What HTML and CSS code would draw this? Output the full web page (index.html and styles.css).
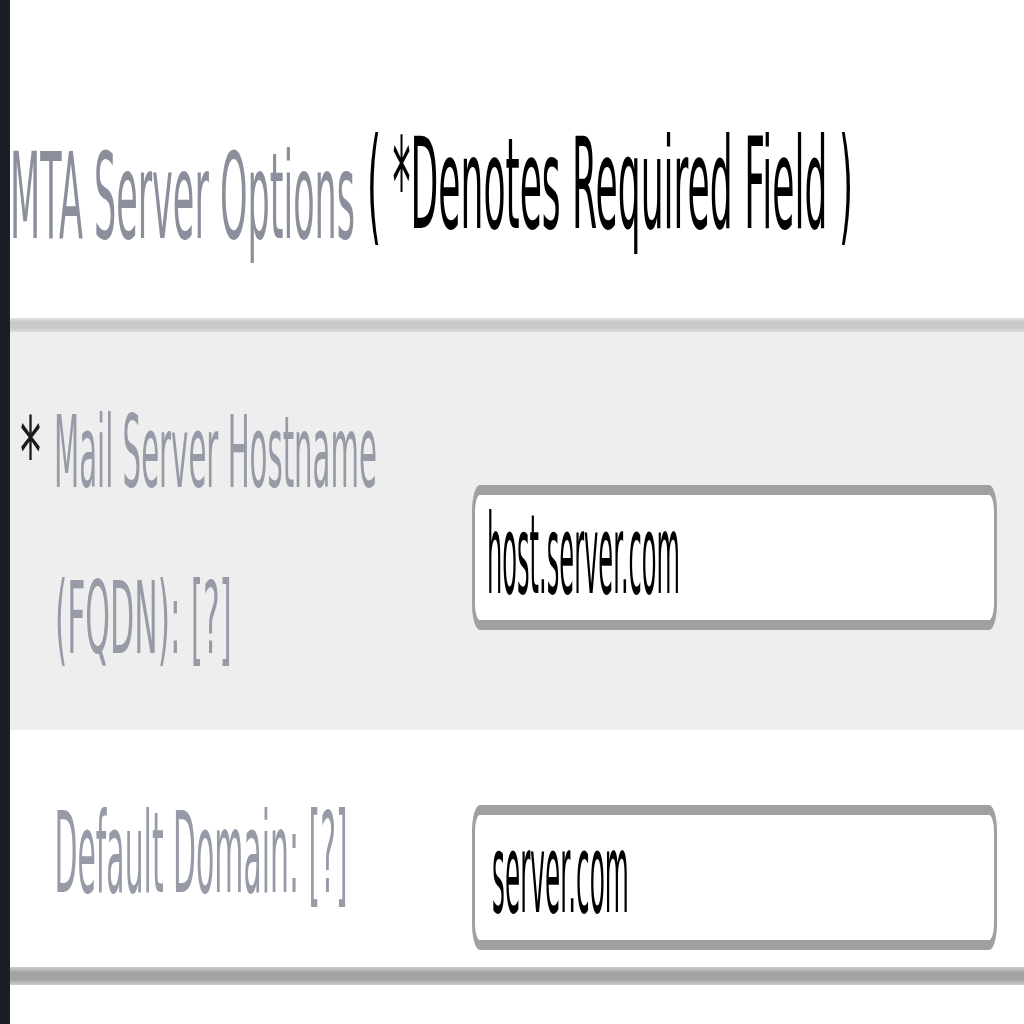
FILE: index.html
```html
<!DOCTYPE html>
<html lang="en">
<head>
<meta charset="utf-8">
<title>MTA Server Options</title>
<link rel="stylesheet" href="styles.css">
</head>
<body>
<div class="page">
  <div class="bar"></div>
  <main class="content">
    <header class="header">
      <svg class="txt" width="1014" height="318" viewBox="0 0 1014 318">
        <text class="t-title" transform="translate(0 238) scale(2.66 9.6)" x="0" y="0" textLength="129.7" lengthAdjust="spacingAndGlyphs">MTA Server Options</text>
        <text class="t-note" transform="translate(357 228) scale(2.66 9.6)" x="0" y="0" textLength="182.7" lengthAdjust="spacingAndGlyphs">( *Denotes Required Field )</text>
      </svg>
    </header>
    <div class="rule rule-top"></div>
    <div class="row row-req">
      <div class="label-cell">
        <svg class="txt" width="462" height="398" viewBox="0 0 462 398">
          <text class="t-mark" transform="translate(10 157) scale(2.66 9.6)" x="0" y="0" textLength="7.9" lengthAdjust="spacingAndGlyphs">*</text>
          <text class="t-label t-label-sm" transform="translate(44 155) scale(2.66 9.6)" x="0" y="0" textLength="121.4" lengthAdjust="spacingAndGlyphs">Mail Server Hostname</text>
          <text class="t-label t-label-sm" transform="translate(45 321) scale(2.66 9.6)" x="0" y="0" textLength="66.5" lengthAdjust="spacingAndGlyphs">(FQDN): [?]</text>
        </svg>
      </div>
      <div class="field field-req">
        <div class="input" role="textbox" aria-label="Mail Server Hostname">
          <svg class="txt" width="519" height="125" viewBox="0 0 519 125">
            <text class="t-value" transform="translate(12 98) scale(2.66 9.6)" x="0" y="0" textLength="72.6" lengthAdjust="spacingAndGlyphs">host.server.com</text>
          </svg>
        </div>
      </div>
    </div>
    <div class="row row-opt">
      <div class="label-cell">
        <svg class="txt" width="462" height="237" viewBox="0 0 462 237">
          <text class="t-label t-label-lg" transform="translate(44.5 162) scale(2.66 9.6)" x="0" y="0" textLength="110.2" lengthAdjust="spacingAndGlyphs">Default Domain: [?]</text>
        </svg>
      </div>
      <div class="field field-opt">
        <div class="input" role="textbox" aria-label="Default Domain">
          <svg class="txt" width="519" height="125" viewBox="0 0 519 125">
            <text class="t-value" transform="translate(17 97) scale(2.66 9.6)" x="0" y="0" textLength="51.5" lengthAdjust="spacingAndGlyphs">server.com</text>
          </svg>
        </div>
      </div>
    </div>
    <div class="rule rule-bottom"></div>
  </main>
</div>
</body>
</html>
```
FILE: styles.css
```css
html, body {
  margin: 0;
  padding: 0;
  background: #ffffff;
}

.page {
  display: flex;
  width: 1024px;
  height: 1024px;
  overflow: hidden;
  background: #ffffff;
}

.bar {
  flex: none;
  width: 10px;
  background: #1b1e27;
}

.content {
  flex: 1;
  display: flex;
  flex-direction: column;
  min-width: 0;
}

.txt {
  display: block;
  overflow: visible;
}

.header {
  height: 318px;
  flex: none;
}

.t-title {
  font-family: "DejaVu Sans", Verdana, sans-serif;
  font-size: 12.5px;
  fill: #8a8f9b;
}

.t-note {
  font-family: "DejaVu Sans", Verdana, sans-serif;
  font-size: 13.125px;
  fill: #000000;
}

.rule {
  flex: none;
}

.rule-top {
  height: 14px;
  background: linear-gradient(#e2e2e2, #c9c9c9 30%, #c9c9c9 70%, #dedede);
}

.rule-bottom {
  height: 18px;
  background: linear-gradient(#cfcfcf, #a3a3a3 30%, #a3a3a3 70%, #cccccc);
}

.row {
  flex: none;
  display: grid;
  grid-template-columns: 462px 525px 27px;
  align-items: start;
}

.row-req {
  height: 398px;
  background: #eeeeee;
}

.row-opt {
  height: 237px;
  background: #ffffff;
}

.t-mark {
  font-family: "DejaVu Sans", Verdana, sans-serif;
  font-size: 10.42px;
  fill: #1a1a1a;
}

.t-label {
  font-family: "DejaVu Sans", Verdana, sans-serif;
  fill: #969ba7;
}

.t-label-sm {
  font-size: 10.42px;
}

.t-label-lg {
  font-size: 11.67px;
}

.field-req {
  margin-top: 153px;
}

.field-opt {
  margin-top: 75px;
}

.input {
  box-sizing: border-box;
  width: 525px;
  height: 145px;
  border-style: solid;
  border-color: #a0a0a0;
  border-width: 10px 3px;
  border-radius: 8px / 26px;
  background: #ffffff;
}

.t-value {
  font-family: "DejaVu Sans", Verdana, sans-serif;
  font-size: 11.46px;
  fill: #000000;
}
```
